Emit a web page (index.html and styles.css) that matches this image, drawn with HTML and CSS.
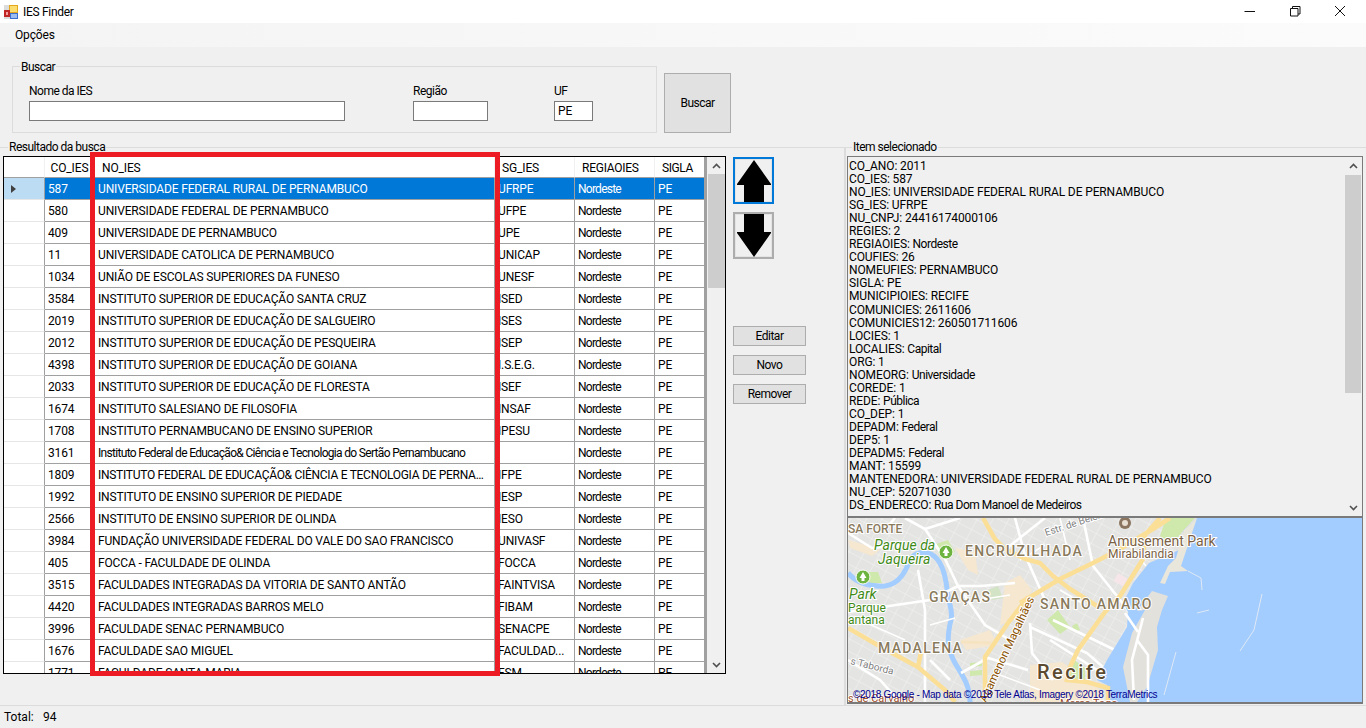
FILE: index.html
```html
<!DOCTYPE html>
<html lang="en">
<head>
  <meta charset="UTF-8">
  <title>IES Finder</title>
  <link rel="stylesheet" href="styles.css">
</head>
<body>
  <div class="titlebar">
    <svg class="app-icon" width="16" height="16" viewBox="0 0 16 16">
      <rect x="1" y="1" width="14" height="14" fill="#dcdcdc"/>
      <rect x="6" y="1" width="9" height="8" fill="#e3a81c"/>
      <rect x="7" y="2" width="7" height="6" fill="#fbdd70"/>
      <rect x="7" y="9" width="8" height="6" fill="#3a6fd0"/>
      <rect x="8" y="10" width="6" height="4" fill="#9cbcf0"/>
      <rect x="1" y="6" width="6" height="7" fill="#c02626"/>
      <rect x="3" y="8" width="2" height="3" fill="#f4a0a0"/>
    </svg>
    <span class="title">IES Finder</span>
    <div class="win-controls">
      <div class="win-btn"><svg width="12" height="12" viewBox="0 0 12 12"><path d="M0.5 6.5h10.5" stroke="#111" fill="none"/></svg></div>
      <div class="win-btn"><svg width="12" height="12" viewBox="0 0 12 12"><path d="M1.5 3.5h7.5v7.5h-7.5zM3.5 3.5v-2h7.5v7.5h-2" stroke="#111" fill="none"/></svg></div>
      <div class="win-btn"><svg width="12" height="12" viewBox="0 0 12 12"><path d="M1 1l10 10M11 1l-10 10" stroke="#111" fill="none"/></svg></div>
    </div>
  </div>
  <div class="menubar"><span class="menu-item">Opções</span></div>

  <div class="search-row">
    <fieldset class="search-box">
      <legend>Buscar</legend>
      <div class="field field-name">
        <label>Nome da IES</label>
        <input type="text">
      </div>
      <div class="field field-region">
        <label>Região</label>
        <input type="text">
      </div>
      <div class="field field-uf">
        <label>UF</label>
        <input type="text" value="PE">
      </div>
    </fieldset>
    <button class="btn btn-search">Buscar</button>
  </div>

  <div class="results">
    <fieldset class="group group-left">
      <legend>Resultado da busca</legend>
      <div class="left-content">
        <div class="grid">
          <div class="table-wrap">
            <table>
              <colgroup>
                <col class="c-head"><col class="c-co"><col class="c-no"><col class="c-sg"><col class="c-reg"><col class="c-sigla">
              </colgroup>
              <thead>
                <tr><th></th><th>CO_IES</th><th class="th-left">NO_IES</th><th class="th-left">SG_IES</th><th class="th-reg">REGIAOIES</th><th class="th-sigla">SIGLA</th></tr>
              </thead>
              <tbody>
                <tr class="selected"><td class="rh"><span class="row-arrow"></span></td><td>587</td><td>UNIVERSIDADE FEDERAL RURAL DE PERNAMBUCO</td><td>UFRPE</td><td>Nordeste</td><td>PE</td></tr>
                <tr><td class="rh"></td><td>580</td><td>UNIVERSIDADE FEDERAL DE PERNAMBUCO</td><td>UFPE</td><td>Nordeste</td><td>PE</td></tr>
                <tr><td class="rh"></td><td>409</td><td>UNIVERSIDADE DE PERNAMBUCO</td><td>UPE</td><td>Nordeste</td><td>PE</td></tr>
                <tr><td class="rh"></td><td>11</td><td>UNIVERSIDADE CATOLICA DE PERNAMBUCO</td><td>UNICAP</td><td>Nordeste</td><td>PE</td></tr>
                <tr><td class="rh"></td><td>1034</td><td>UNIÃO DE ESCOLAS SUPERIORES DA FUNESO</td><td>UNESF</td><td>Nordeste</td><td>PE</td></tr>
                <tr><td class="rh"></td><td>3584</td><td>INSTITUTO SUPERIOR DE EDUCAÇÃO SANTA CRUZ</td><td>ISED</td><td>Nordeste</td><td>PE</td></tr>
                <tr><td class="rh"></td><td>2019</td><td>INSTITUTO SUPERIOR DE EDUCAÇÃO DE SALGUEIRO</td><td>ISES</td><td>Nordeste</td><td>PE</td></tr>
                <tr><td class="rh"></td><td>2012</td><td>INSTITUTO SUPERIOR DE EDUCAÇÃO DE PESQUEIRA</td><td>ISEP</td><td>Nordeste</td><td>PE</td></tr>
                <tr><td class="rh"></td><td>4398</td><td>INSTITUTO SUPERIOR DE EDUCAÇÃO DE GOIANA</td><td>I.S.E.G.</td><td>Nordeste</td><td>PE</td></tr>
                <tr><td class="rh"></td><td>2033</td><td>INSTITUTO SUPERIOR DE EDUCAÇÃO DE FLORESTA</td><td>ISEF</td><td>Nordeste</td><td>PE</td></tr>
                <tr><td class="rh"></td><td>1674</td><td>INSTITUTO SALESIANO DE FILOSOFIA</td><td>INSAF</td><td>Nordeste</td><td>PE</td></tr>
                <tr><td class="rh"></td><td>1708</td><td>INSTITUTO PERNAMBUCANO DE ENSINO SUPERIOR</td><td>IPESU</td><td>Nordeste</td><td>PE</td></tr>
                <tr><td class="rh"></td><td>3161</td><td class="low">Instituto Federal de Educação&amp; Ciência e Tecnologia do Sertão Pernambucano</td><td></td><td>Nordeste</td><td>PE</td></tr>
                <tr><td class="rh"></td><td>1809</td><td class="tight">INSTITUTO FEDERAL DE EDUCAÇÃO&amp; CIÊNCIA E TECNOLOGIA DE PERNAMBUCO</td><td>IFPE</td><td>Nordeste</td><td>PE</td></tr>
                <tr><td class="rh"></td><td>1992</td><td>INSTITUTO DE ENSINO SUPERIOR DE PIEDADE</td><td>IESP</td><td>Nordeste</td><td>PE</td></tr>
                <tr><td class="rh"></td><td>2566</td><td>INSTITUTO DE ENSINO SUPERIOR DE OLINDA</td><td>IESO</td><td>Nordeste</td><td>PE</td></tr>
                <tr><td class="rh"></td><td>3984</td><td>FUNDAÇÃO UNIVERSIDADE FEDERAL DO VALE DO SAO FRANCISCO</td><td>UNIVASF</td><td>Nordeste</td><td>PE</td></tr>
                <tr><td class="rh"></td><td>405</td><td>FOCCA - FACULDADE DE OLINDA</td><td>FOCCA</td><td>Nordeste</td><td>PE</td></tr>
                <tr><td class="rh"></td><td>3515</td><td>FACULDADES INTEGRADAS DA VITORIA DE SANTO ANTÃO</td><td>FAINTVISA</td><td>Nordeste</td><td>PE</td></tr>
                <tr><td class="rh"></td><td>4420</td><td>FACULDADES INTEGRADAS BARROS MELO</td><td>FIBAM</td><td>Nordeste</td><td>PE</td></tr>
                <tr><td class="rh"></td><td>3996</td><td>FACULDADE SENAC PERNAMBUCO</td><td>SENACPE</td><td>Nordeste</td><td>PE</td></tr>
                <tr><td class="rh"></td><td>1676</td><td>FACULDADE SAO MIGUEL</td><td>FACULDAD...</td><td>Nordeste</td><td>PE</td></tr>
                <tr><td class="rh"></td><td>1771</td><td>FACULDADE SANTA MARIA</td><td>FSM</td><td>Nordeste</td><td>PE</td></tr>
              </tbody>
            </table>
          </div>
          <div class="grid-strip"></div>
          <div class="scrollbar">
            <div class="sb-arrow"><svg width="9" height="6" viewBox="0 0 9 6"><path d="M1 5l3.5-3.5L8 5" stroke="#505050" stroke-width="1.6" fill="none"/></svg></div>
            <div class="sb-track"><div class="sb-thumb thumb-grid"></div></div>
            <div class="sb-arrow"><svg width="9" height="6" viewBox="0 0 9 6"><path d="M1 1l3.5 3.5L8 1" stroke="#505050" stroke-width="1.6" fill="none"/></svg></div>
          </div>
          <div class="highlight"></div>
        </div>

        <div class="actions">
          <button class="btn btn-arrow btn-focus">
            <svg width="36" height="43" viewBox="0 0 36 43"><path d="M18 1L35 25V26H28V43H8V26H1V25Z" fill="#000"/></svg>
          </button>
          <button class="btn btn-arrow btn-down">
            <svg width="36" height="43" viewBox="0 0 36 43"><path d="M8 0H28V18H35V19L18 43L1 19V18H8Z" fill="#000"/></svg>
          </button>
          <button class="btn btn-small btn-first">Editar</button>
          <button class="btn btn-small">Novo</button>
          <button class="btn btn-small">Remover</button>
        </div>
      </div>
    </fieldset>

    <fieldset class="group group-right">
      <legend>Item selecionado</legend>
      <div class="detail">
        <div class="detail-text">CO_ANO: 2011
CO_IES: 587
NO_IES: UNIVERSIDADE FEDERAL RURAL DE PERNAMBUCO
SG_IES: UFRPE
NU_CNPJ: 24416174000106
REGIES: 2
REGIAOIES: <span class="low">Nordeste</span>
COUFIES: 26
NOMEUFIES: PERNAMBUCO
SIGLA: PE
MUNICIPIOIES: RECIFE
COMUNICIES: 2611606
COMUNICIES12: 260501711606
LOCIES: 1
LOCALIES: <span class="low">Capital</span>
ORG: 1
NOMEORG: <span class="low">Universidade</span>
COREDE: 1
REDE: <span class="low">Pública</span>
CO_DEP: 1
DEPADM: <span class="low">Federal</span>
DEP5: 1
DEPADM5: <span class="low">Federal</span>
MANT: 15599
MANTENEDORA: UNIVERSIDADE FEDERAL RURAL DE PERNAMBUCO
NU_CEP: 52071030
DS_ENDERECO: <span class="low">Rua Dom Manoel de Medeiros</span></div>
        <div class="scrollbar scrollbar-detail">
          <div class="sb-arrow"><svg width="9" height="6" viewBox="0 0 9 6"><path d="M1 5l3.5-3.5L8 5" stroke="#505050" stroke-width="1.6" fill="none"/></svg></div>
          <div class="sb-track"><div class="sb-thumb thumb-detail"></div></div>
          <div class="sb-arrow"><svg width="9" height="6" viewBox="0 0 9 6"><path d="M1 1l3.5 3.5L8 1" stroke="#505050" stroke-width="1.6" fill="none"/></svg></div>
        </div>
      </div>
      <div class="map">
        <svg width="514" height="184" viewBox="848 518 514 184">
          <defs>
            <pattern id="streets" width="14" height="11" patternUnits="userSpaceOnUse" patternTransform="rotate(28)">
              <path d="M0 0H14M0 0V11" stroke="#f3f3f1" stroke-width="1" fill="none"/>
            </pattern>
          </defs>
          <rect x="848" y="518" width="514" height="184" fill="#e4e4e2"/>
          <rect x="848" y="518" width="350" height="184" fill="url(#streets)"/>

          <path class="area" d="M848 540L866 545L880 550L872 556L850 548Z"/>
          <path class="area" d="M955 548L975 552L978 575L968 570Z"/>
          <path class="area" d="M1005 583L1020 575L1032 590L1018 618L1000 625Z"/>
          <path class="area" d="M1030 665L1062 662L1100 690L1100 702L1030 702Z"/>
          <path class="area" d="M960 640L990 630L998 645L966 650Z"/>

          <path class="park" d="M936 544L948 540L955 552L940 558Z"/>
          <path class="park" d="M868 572L878 572L882 583L866 583Z"/>
          <path class="park" d="M1047 620L1058 610L1070 627L1060 634Z"/>
          <path class="park" d="M1072 626L1077 623L1080 630L1075 632Z"/>
          <path class="park" d="M970 663L982 662L982 666L970 667ZM970 671L982 670L982 675L970 676Z"/>
          <path class="park" d="M1074 660L1085 668L1085 682L1068 680Z"/>
          <path class="park" d="M1166 518L1195 518L1182 532L1172 545L1160 536Z"/>
          <path class="park-soft" d="M988 590L998 586L1003 598L992 600Z"/>
          <rect x="1115" y="575" width="11" height="9" fill="#f6e6ea" transform="rotate(30 1120 580)"/>

          <path class="river" d="M848 573C856 582 868 587 885 586C900 584 906 570 910 560C914 552 926 550 934 556C944 564 946 580 948 596C950 606 953 612 951 620C946 640 948 650 955 663C962 675 970 685 970 702"/>

          <path class="road-w" d="M848 533L872 548L905 545M905 518L925 529L945 559L958 586L981 586L1015 583M925 529L960 518M918 570L925 610L925 702M848 612L930 600L958 586M958 586L985 625L1010 640M1015 518L1025 555L1045 600M1083 518L1093 566L1117 596L1130 613L1137 640L1148 655L1148 702M1030 627L1087 653L1103 667M1030 623L1032 653L1053 680M961 673L988 658L1028 670M1053 620L1115 650M1050 640L1105 675M895 518L885 530M1045 518L1002 552M930 660L950 680M848 660L880 680L900 702M1137 640L1165 665L1168 702"/>
          <path class="road-t" d="M1020 560L1045 545M1060 518L1070 560M1125 540L1146 566M978 600L1010 595M860 620L905 640M930 625L955 618M1060 590L1085 605M1000 675L1040 690"/>

          <path class="sea" d="M1197 518H1362V702H1110L1107 685L1097 680L1107 660L1127 627L1128 612L1123 603L1133 583L1149 563L1179 550L1184 530Z"/>
          <path class="pier" d="M1184 530L1197 518L1181 566L1188 571L1170 572L1165 584L1160 583L1168 566L1176 558Z"/>
          <path class="land" d="M1152 591L1168 596L1162 610L1157 627L1158 650L1147 687L1137 702H1130L1123 667L1132 633L1145 610L1137 611Z"/>
          <path class="road-w" d="M1137 640L1148 655L1148 702M1125 613L1138 632M1143 618L1132 660L1134 700"/>
          <path class="jet" d="M1188 571L1201 578L1202 590M1262 594L1254 630L1240 651M1176 652L1164 695M1197 613L1209 610"/>

          <path class="road-y" d="M983 518L995 539L1005 549L1025 559L1040 563L1053 576L1070 589L1097 606M1020 603L1060 579L1093 563L1120 549L1153 529L1170 518M1143 559L1120 596L1105 612L1078 650L1070 667L1067 680L1087 682L1108 688L1108 702M1160 518L1145 535L1143 559M1028 597L1008 623L985 657L985 702M848 628L881 647L918 667L945 690L955 702M918 667L921 652"/>
          <path class="road-p" d="M961 642L991 643"/>

          <circle cx="1125" cy="523" r="6" fill="#8b7560"/>
          <circle cx="1125" cy="523" r="3" fill="#e8dfd2"/>
          <circle cx="946" cy="552" r="7" fill="#6cb33f" stroke="#fff"/>
          <path d="M946 547l3.5 6h-2v3h-3v-3h-2z" fill="#fff"/>
          <circle cx="863" cy="577" r="7" fill="#6cb33f" stroke="#fff"/>
          <path d="M863 572l3.5 6h-2v3h-3v-3h-2z" fill="#fff"/>

          <text class="lbl-dist" x="848" y="533" font-size="12">SA FORTE</text>
          <text class="lbl-park" x="874" y="550" font-size="14">Parque da</text>
          <text class="lbl-park" x="878" y="564" font-size="14">Jaqueira</text>
          <text class="lbl-park" x="849" y="599" font-size="14">Park</text>
          <text class="lbl-park2" x="848" y="612" font-size="12">Parque</text>
          <text class="lbl-park2" x="848" y="624" font-size="12">antana</text>
          <text class="lbl-dist lbl-wide" x="965" y="556" font-size="14">ENCRUZILHADA</text>
          <text class="lbl-dist lbl-wide" x="929" y="602" font-size="14">GRAÇAS</text>
          <text class="lbl-dist lbl-wide" x="1040" y="609" font-size="14">SANTO AMARO</text>
          <text class="lbl-dist lbl-wide" x="878" y="653" font-size="14">MADALENA</text>
          <text class="lbl-poi" x="1108" y="546" font-size="14">Amusement Park</text>
          <text class="lbl-poi" x="1108" y="558" font-size="12">Mirabilandia</text>
          <text class="lbl-road" x="1046" y="536" font-size="10" transform="rotate(-18 1046 536)">Estr. de Belém</text>
          <text class="lbl-road" x="850" y="664" font-size="10" transform="rotate(14 850 664)">s Taborda</text>
          <text class="lbl-mag" x="986" y="703" font-size="11.5" transform="rotate(-65 986 703)">Agamenon Magalhães</text>
          <text class="lbl-city" x="1037" y="679" font-size="20">Recife</text>
          <text class="lbl-brown" x="848" y="702" font-size="11">s de Carvalho</text>
          <text class="lbl-brown" x="1060" y="707" font-size="11">Mercs Tago</text>
          <text class="lbl-attr" x="853" y="698" font-size="10">©2018 Google - Map data ©2018 Tele Atlas, Imagery ©2018 TerraMetrics</text>
        </svg>
      </div>
    </fieldset>
  </div>

  <div class="statusbar"><span class="total-label">Total:</span><span>94</span></div>
</body>
</html>
```

FILE: styles.css
```css
* {
  box-sizing: border-box;
}
html, body {
  height: 100%;
}
body {
  margin: 0;
  width: 1366px;
  height: 728px;
  overflow: hidden;
  display: flex;
  flex-direction: column;
  font-family: Roboto, "Liberation Sans", sans-serif;
  font-size: 12px;
  letter-spacing: -0.5px;
  color: #000;
  background-color: #f0f0f0;
}
fieldset {
  margin: 0;
  padding: 0;
  min-width: 0;
  border: 1px solid #dcdcdc;
}
legend {
  padding: 0 1px;
  margin-left: 5px;
  line-height: 12px;
  font-size: 12px;
}
.titlebar {
  height: 23px;
  display: flex;
  align-items: center;
  background: #fff;
  padding-left: 3px;
}
.app-icon {
  margin-right: 4px;
}
.title {
  letter-spacing: -0.3px;
}
.win-controls {
  margin-left: auto;
  padding-right: 4px;
  display: flex;
}
.win-btn {
  width: 45px;
  height: 23px;
  display: flex;
  align-items: center;
  justify-content: center;
  padding-bottom: 2px;
}
.menubar {
  height: 24px;
  display: flex;
  align-items: center;
  padding-left: 15px;
  background: linear-gradient(90deg, #f4f4f4, #fbfbfb);
}
.menu-item {
  letter-spacing: -0.15px;
}
.search-row {
  height: 94px;
  display: flex;
  padding: 12px 0 0 12px;
  gap: 7px;
  align-items: flex-start;
}
.search-box {
  width: 645px;
  height: 74px;
  display: flex;
  padding: 11px 0 0 16px;
}
.search-box legend {
  margin-left: -9px;
  padding-top: 2px;
  line-height: 12px;
}
.field {
  display: flex;
  flex-direction: column;
}
.field label {
  height: 17px;
}
.field input {
  height: 20px;
  border: 1px solid #7a7a7a;
  background: #fff;
  padding: 0 3px;
  font: inherit;
  letter-spacing: -0.15px;
  border-radius: 0;
  outline: none;
}
.field-name {
  width: 316px;
  margin-right: 68px;
}
.field-region {
  width: 75px;
  margin-right: 66px;
}
.field-uf {
  width: 39px;
}
.btn {
  font: inherit;
  letter-spacing: inherit;
  color: #000;
  background: #e1e1e1;
  border: 1px solid #adadad;
  padding: 0;
  display: flex;
  align-items: center;
  justify-content: center;
}
.btn-search {
  width: 67px;
  height: 60px;
  margin-top: 14px;
}
.results {
  height: 564px;
  display: flex;
}
.group {
  height: 564px;
  border-bottom: 0;
}
.group-left {
  width: 845px;
  border-left: 0;
  padding: 3px 0 0 3px;
}
.group-right {
  width: 521px;
  border-right: 0;
  padding: 3px 0 0 1px;
}
.left-content {
  display: flex;
  align-items: flex-start;
}
.grid {
  position: relative;
  width: 723px;
  height: 518px;
  border: 1px solid #000;
  display: flex;
  background: #f0f0f0;
}
.table-wrap {
  width: 700px;
  height: 516px;
  overflow: hidden;
}
table {
  width: 700px;
  table-layout: fixed;
  border-collapse: separate;
  border-spacing: 0;
  background: #fff;
}
.c-head { width: 41px; }
.c-co { width: 50px; }
.c-no { width: 400px; }
.c-sg { width: 80px; }
.c-reg { width: 80px; }
.c-sigla { width: 49px; }
th {
  height: 21px;
  font-weight: 400;
  text-align: center;
  padding: 2px 3px 0;
  background: #fff;
  border-right: 1px solid #f0f0f0;
  border-bottom: 1px solid #a0a0a0;
  white-space: nowrap;
  overflow: hidden;
  letter-spacing: -0.15px;
}
th.th-left {
  text-align: left;
  padding-left: 7px;
}
th.th-reg {
  text-align: left;
  padding-left: 7px;
  letter-spacing: -0.25px;
}
th.th-sigla {
  text-align: left;
  padding-left: 7px;
  letter-spacing: -0.4px;
}
td {
  height: 22px;
  padding: 0 3px;
  border-right: 1px solid #a0a0a0;
  border-bottom: 1px solid #a0a0a0;
  white-space: nowrap;
  overflow: hidden;
  text-overflow: ellipsis;
  letter-spacing: -0.15px;
}
td:nth-child(5) {
  letter-spacing: -0.75px;
}
td.low {
  letter-spacing: -0.68px;
}
td.tight {
  letter-spacing: -0.28px;
}
td:last-child, th:last-child {
  border-right: 0;
}
td.rh {
  padding: 0 0 0 7px;
  border-bottom-color: #e6e6e6;
}
tr.selected td {
  background: #0078d7;
  color: #fff;
}
tr.selected td.rh {
  background: #bcdcf4;
}
.row-arrow {
  display: block;
  width: 0;
  height: 0;
  border-left: 5px solid #404040;
  border-top: 4px solid transparent;
  border-bottom: 4px solid transparent;
}
.grid-strip {
  width: 3px;
  background: #a0a0a0;
}
.scrollbar {
  width: 17px;
  margin-left: 1px;
  display: flex;
  flex-direction: column;
  background: #f0f0f0;
}
.sb-arrow {
  height: 17px;
  display: flex;
  align-items: center;
  justify-content: center;
}
.sb-track {
  flex: 1;
}
.sb-thumb {
  background: #cdcdcd;
}
.thumb-grid {
  height: 114px;
}
.thumb-detail {
  height: 218px;
  margin-top: 1px;
}
.highlight {
  position: absolute;
  left: 86px;
  top: -5px;
  width: 410px;
  height: 524px;
  border: 5px solid #ed1c24;
}
.actions {
  margin-left: 7px;
  margin-top: 1px;
  display: flex;
  flex-direction: column;
  align-items: flex-start;
}
.btn-arrow {
  width: 41px;
  height: 47px;
  background: #f0f0f0;
  border: 2px solid #adadad;
  box-shadow: inset 0 0 0 1px #e4e4e4;
}
.btn-focus {
  border-color: #0078d7;
}
.btn-down {
  margin-top: 8px;
}
.btn-small {
  width: 73px;
  height: 20px;
  margin-bottom: 9px;
}
.btn-first {
  margin-top: 67px;
}
.detail {
  width: 516px;
  height: 362px;
  border: 1px solid #7a7a7a;
  border-bottom: 2px solid #7a7a7a;
  display: flex;
  background: #f0f0f0;
}
.detail-text {
  width: 497px;
  height: 359px;
  overflow: hidden;
  padding: 3px 0 0 1px;
  line-height: 13.04px;
  white-space: pre-line;
  letter-spacing: -0.12px;
}
.detail-text .low {
  letter-spacing: -0.5px;
}
.scrollbar-detail {
  margin-left: 0;
  width: 16px;
}
.map {
  width: 516px;
  height: 186px;
  border: 1px solid #7a7a7a;
  border-top: 0;
  border-bottom-width: 2px;
  overflow: hidden;
}
.map svg {
  display: block;
}
.area { fill: #f5e7d0; }
.park { fill: #cfe8ab; }
.park-soft { fill: #d3e3c6; }
.sea { fill: #a3ccff; }
.land { fill: #e3e1dc; }
.pier { fill: #e9e6dc; }
.river {
  fill: none;
  stroke: #a3ccff;
  stroke-width: 5;
}
.road-w {
  fill: none;
  stroke: #fff;
  stroke-width: 2.6;
}
.road-t {
  fill: none;
  stroke: #fff;
  stroke-width: 1.6;
}
.road-y {
  fill: none;
  stroke: #fbdf96;
  stroke-width: 4.5;
}
.road-p {
  fill: none;
  stroke: #f6e3c2;
  stroke-width: 3;
}
.jet {
  fill: none;
  stroke: #dfe9f5;
  stroke-width: 1;
}
.map text {
  font-family: Roboto, sans-serif;
  letter-spacing: 0;
  paint-order: stroke;
  stroke: #fff;
  stroke-width: 2px;
}
.lbl-dist { fill: #8a7a5c; font-weight: 500; }
.map .lbl-wide { letter-spacing: 1.3px; }
.lbl-park { fill: #3f8a17; font-style: italic; }
.lbl-park2 { fill: #3f8a17; }
.lbl-poi { fill: #7a5f45; }
.lbl-road { fill: #7f7f7f; }
.lbl-mag { fill: #8a5200; }
.lbl-brown { fill: #a0522d; }
.map .lbl-city { fill: #5b4a2f; font-weight: 500; letter-spacing: 2.5px; }
.map .lbl-attr {
  fill: #000090;
  stroke: none;
  font-family: "Liberation Sans", sans-serif;
  letter-spacing: -0.3px;
}
.statusbar {
  height: 23px;
  display: flex;
  align-items: center;
  padding-left: 4px;
  border-top: 1px solid #dcdcdc;
  letter-spacing: 0;
}
.total-label {
  width: 39px;
}
```
